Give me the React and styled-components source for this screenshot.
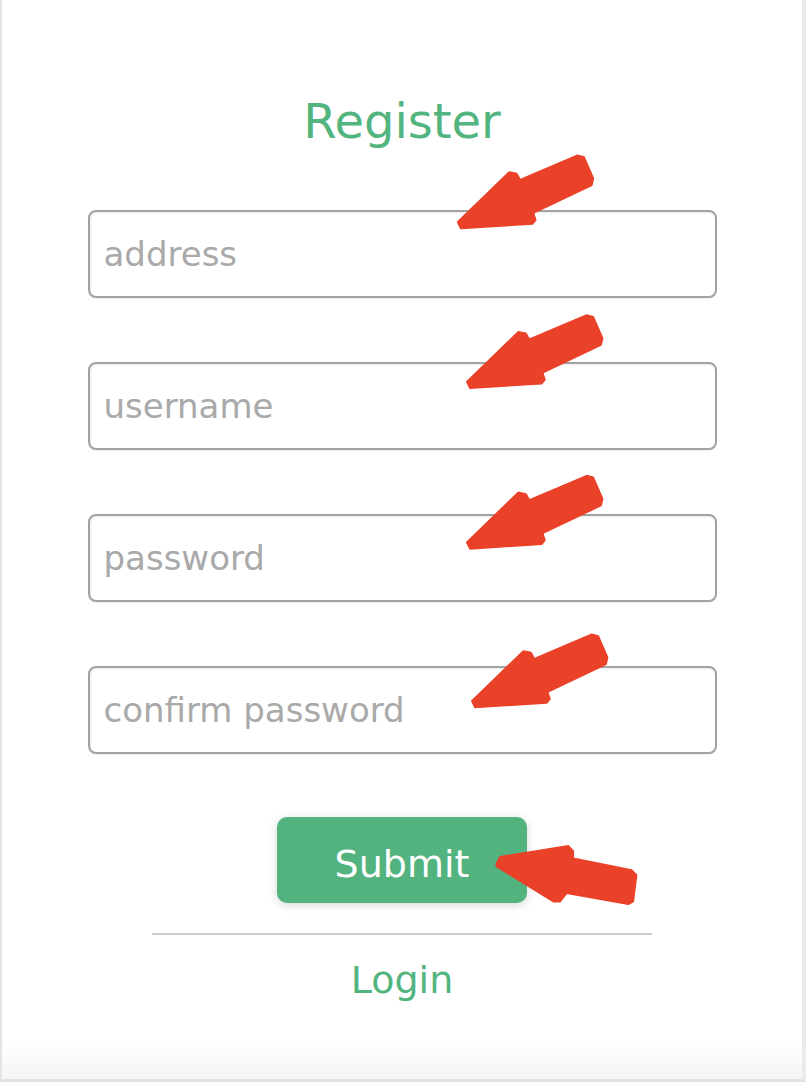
import React from "react";
import styled, { createGlobalStyle } from "styled-components";

const GlobalStyle = createGlobalStyle`
  html, body { margin: 0; padding: 0; background: #ffffff; }
  body { font-family: "DejaVu Sans", "Liberation Sans", sans-serif; }
  * { box-sizing: border-box; }
`;

const Frame = styled.div`
  position: relative;
  width: 806px;
  min-height: 1082px;
  border-left: 2px solid #e4e4e4;
  border-right: 4px solid #ebebeb;
  border-bottom: 3px solid #e2e2e2;
  background: linear-gradient(to bottom, #ffffff 0, #ffffff 1040px, #f5f5f5 1079px);
  display: flex;
  flex-direction: column;
  align-items: center;
  padding-top: 93px;
`;

const Title = styled.h1`
  margin: 0;
  font-family: "DejaVu Sans", sans-serif;
  font-weight: normal;
  font-size: 48px;
  line-height: 56px;
  color: #52b47e;
`;

const Form = styled.form`
  width: 629px;
  margin: 61px 0 0 0;
  display: flex;
  flex-direction: column;
  align-items: center;
`;

const Fields = styled.div`
  width: 100%;
  display: flex;
  flex-direction: column;
  gap: 64px;
`;

const Field = styled.input`
  width: 100%;
  height: 88px;
  margin: 0;
  padding: 0 14px;
  border: 2px solid #a2a2a2;
  border-radius: 8px;
  background: #ffffff;
  box-shadow: inset 1px 1px 2px rgba(0, 0, 0, 0.08), 0 1px 1px rgba(0, 0, 0, 0.06);
  font-family: "DejaVu Sans", sans-serif;
  font-size: 34px;
  color: #333;
  outline: none;
  &::placeholder { color: #a9a9a9; }
`;

const SubmitButton = styled.button`
  margin-top: 63px;
  width: 250px;
  height: 86px;
  border: none;
  border-radius: 10px;
  background: #52b37f;
  box-shadow: 0 2px 10px rgba(0, 0, 0, 0.16);
  color: #ffffff;
  font-family: "DejaVu Sans", sans-serif;
  font-size: 38px;
  padding: 8px 0 0 0;
  display: flex;
  align-items: center;
  justify-content: center;
  cursor: pointer;
`;

const Divider = styled.hr`
  width: 500px;
  height: 2px;
  margin: 30px 0 0 0;
  border: none;
  background: #cdcdcd;
`;

const LoginLink = styled.a`
  margin-top: 23px;
  font-family: "DejaVu Sans", sans-serif;
  font-size: 38px;
  line-height: 44px;
  color: #52b47e;
  text-decoration: none;
`;

const Overlay = styled.svg`
  position: absolute;
  left: -2px;
  top: 0;
  width: 806px;
  height: 1082px;
  pointer-events: none;
`;

const ARROW_DOWN_LEFT =
  "0,0 51.6,-50 59.3,-48.4 62.6,-42.4 120,-66.7 126.6,-65 136,-43.4 134.3,-36.7 76,-9 78.3,-2 75,2 3.3,6.6";

const downLeftArrows = [
  { x: 457.5, y: 222 },
  { x: 466.7, y: 381.7 },
  { x: 466.7, y: 542.3 },
  { x: 471.7, y: 701 },
];

const SUBMIT_ARROW =
  "496,864.3 500,856.7 568.3,845.7 573.3,851 573.3,858.3 631.7,870 636.7,875 633.3,901.7 628.3,904.3 566.7,893.3 560,901.7 553.3,901.7 496.7,866.7";

function Annotations() {
  return (
    <Overlay viewBox="0 0 806 1082">
      {downLeftArrows.map((a, i) => (
        <polygon
          key={i}
          points={ARROW_DOWN_LEFT}
          transform={`translate(${a.x} ${a.y})`}
          fill="#ea4129"
          stroke="#ea4129"
          strokeWidth="1.5"
          strokeLinejoin="round"
        />
      ))}
      <polygon
        points={SUBMIT_ARROW}
        fill="#ea4129"
        stroke="#ea4129"
        strokeWidth="1.5"
        strokeLinejoin="round"
      />
    </Overlay>
  );
}

const fields = [
  { name: "address", type: "text", placeholder: "address" },
  { name: "username", type: "text", placeholder: "username" },
  { name: "password", type: "password", placeholder: "password" },
  { name: "confirm", type: "password", placeholder: "confirm password" },
];

export default function App() {
  return (
    <>
      <GlobalStyle />
      <Frame>
        <Title>Register</Title>
        <Form onSubmit={(e) => e.preventDefault()}>
          <Fields>
            {fields.map((f) => (
              <Field key={f.name} name={f.name} type={f.type} placeholder={f.placeholder} />
            ))}
          </Fields>
          <SubmitButton type="submit">Submit</SubmitButton>
          <Divider />
          <LoginLink href="#">Login</LoginLink>
        </Form>
        <Annotations />
      </Frame>
    </>
  );
}
